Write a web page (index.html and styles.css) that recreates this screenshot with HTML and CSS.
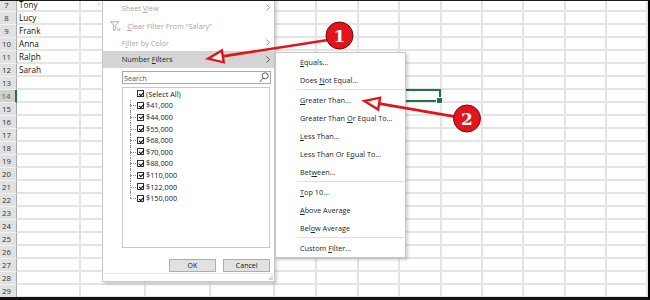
FILE: index.html
```html
<!DOCTYPE html>
<html lang="en">
<head>
  <meta charset="UTF-8" />
  <title>Number Filters</title>
  <link rel="stylesheet" href="styles.css">
</head>
<body>
  <div class="screen">
    <div class="sheet" id="sheet"></div>

    <div class="filter-menu">
      <div class="menu-item muted">
        <span class="ico"></span>
        <span class="label">Sheet <u>V</u>iew</span>
        <svg class="chev" width="4" height="7" viewBox="0 0 4 7"><path d="M0.5 0.5l3 3-3 3" /></svg>
      </div>
      <div class="menu-gap"></div>
      <div class="menu-item muted">
        <span class="ico">
          <svg width="11" height="11" viewBox="0 0 11 11"><path d="M0.5 0.8h8.4l-3.2 3.6v3.8l-2 1.4v-5.2z" /><path d="M7.4 7.2l2.8 2.8M10.2 7.2l-2.8 2.8" /></svg>
        </span>
        <span class="label shifted"><u>C</u>lear Filter From "Salary"</span>
      </div>
      <div class="menu-item muted">
        <span class="ico"></span>
        <span class="label">F<u>i</u>lter by Color</span>
        <svg class="chev" width="4" height="7" viewBox="0 0 4 7"><path d="M0.5 0.5l3 3-3 3" /></svg>
      </div>
      <div class="menu-item hover">
        <span class="ico"></span>
        <span class="label">Number <u>F</u>ilters</span>
        <svg class="chev" width="4" height="7" viewBox="0 0 4 7"><path d="M0.5 0.5l3 3-3 3" /></svg>
      </div>

      <div class="search">
        <span>Search</span>
        <svg width="10" height="11" viewBox="0 0 10 11"><circle cx="6.2" cy="3.8" r="3" /><path d="M4 6.2L0.8 10" /></svg>
      </div>

      <div class="values">
        <div class="value"><span class="box"></span>(Select All)</div>
        <div class="tree">
          <div class="value"><span class="box"></span>$41,000</div>
          <div class="value"><span class="box"></span>$44,000</div>
          <div class="value"><span class="box"></span>$55,000</div>
          <div class="value"><span class="box"></span>$68,000</div>
          <div class="value"><span class="box"></span>$70,000</div>
          <div class="value"><span class="box"></span>$88,000</div>
          <div class="value"><span class="box"></span>$110,000</div>
          <div class="value"><span class="box"></span>$122,000</div>
          <div class="value"><span class="box"></span>$150,000</div>
        </div>
      </div>

      <div class="actions">
        <button class="btn">OK</button>
        <button class="btn">Cancel</button>
      </div>
      <div class="grip">
        <svg width="5" height="5" viewBox="0 0 5 5"><rect x="3.5" y="0.5" width="1" height="1" /><rect x="1.5" y="2.5" width="1" height="1" /><rect x="3.5" y="2.5" width="1" height="1" /><rect x="3.5" y="3.8" width="1" height="1" /><rect x="1.5" y="3.8" width="1" height="1" /></svg>
      </div>
    </div>

    <div class="submenu">
      <div class="option"><span><u>E</u>quals...</span></div>
      <div class="option"><span>Does <u>N</u>ot Equal...</span></div>
      <div class="divider"></div>
      <div class="option"><span><u>G</u>reater Than...</span></div>
      <div class="option"><span>Greater Than <u>O</u>r Equal To...</span></div>
      <div class="option"><span><u>L</u>ess Than...</span></div>
      <div class="option"><span>Less Than Or E<u>q</u>ual To...</span></div>
      <div class="option"><span>Bet<u>w</u>een...</span></div>
      <div class="divider"></div>
      <div class="option"><span><u>T</u>op 10...</span></div>
      <div class="option"><span><u>A</u>bove Average</span></div>
      <div class="option"><span>Bel<u>o</u>w Average</span></div>
      <div class="divider"></div>
      <div class="option"><span>Custom <u>F</u>ilter...</span></div>
    </div>

    <svg class="notes" width="650" height="300" viewBox="0 0 650 300">
      <line x1="221" y1="56.6" x2="328" y2="40" />
      <polygon points="208,58.7 223.7,62.3 221.9,50.5" />
      <circle cx="339.5" cy="35.5" r="13.5" />
      <text x="339.5" y="41.6">1</text>

      <line x1="378" y1="103.4" x2="455" y2="116.6" />
      <polygon points="364.3,101 378.1,109.5 380.1,97.7" />
      <circle cx="467" cy="118.5" r="13.5" />
      <text x="467" y="124.6">2</text>
    </svg>
  </div>

  <script>
    const names = { 7: 'Tony', 8: 'Lucy', 9: 'Frank', 10: 'Anna', 11: 'Ralph', 12: 'Sarah' };
    const sheet = document.getElementById('sheet');
    for (let r = 7; r <= 29; r++) {
      const row = document.createElement('div');
      row.className = 'row';
      let html = `<div class="row-head${r === 14 ? ' current' : ''}">${r}</div>`;
      for (let c = 0; c < 13; c++) {
        let cls = 'cell';
        let text = '';
        if (c === 0 && names[r]) text = names[r];
        if (c === 1 && r === 7) { cls += ' mark'; text = ':'; }
        if (c === 7 && r === 14) cls += ' active';
        html += `<div class="${cls}">${text}</div>`;
      }
      row.innerHTML = html;
      sheet.appendChild(row);
    }
  </script>
</body>
</html>
```

FILE: styles.css
```css
* { box-sizing: border-box; }
body {
  margin: 0;
  background: #fff;
  font-family: 'Open Sans', 'Noto Sans', sans-serif;
}
.screen {
  position: relative; width: 650px; height: 300px; overflow: hidden;
  background: #fff;
  border-top: 1px solid #1c1c1c; border-right: 2px solid #000; border-bottom: 3px solid #111;
}

/* sheet grid */
.sheet { margin-top: -2px; }
.row {
  display: grid; height: 13px;
  grid-template-columns: 17px 64px 65px 65px 64px 42px 42px 41px 42px 41px 41px 42px 41px 41px;
}
.row-head {
  background: #e1e1e1; color: #333;
  border-right: 1px solid #ababab; border-bottom: 1px solid #f2f2f2;
  font-size: 7.8px; line-height: 12px; text-align: center; padding-right: 3px;
}
.row-head.current {
  background: #d0d0d0; color: #217346; border-right: 2px solid #217346;
}
.cell {
  position: relative;
  border-right: 2px solid #e4e4e4; border-bottom: 2px solid #e4e4e4;
  font-size: 8.2px; line-height: 11px; padding-left: 2px; color: #111;
  white-space: nowrap;
}
.cell.mark { padding-left: 17px; color: #555; font-size: 6px; }
.cell.active { z-index: 1; }
.cell.active::before {
  content: ""; position: absolute; left: -1px; top: -1px; right: -1px; bottom: -1px;
  border: 2px solid #217346;
}
.cell.active::after {
  content: ""; position: absolute; right: -3px; bottom: -3px;
  width: 5px; height: 5px; background: #217346; border: 1px solid #fff;
}

/* autofilter dropdown */
.filter-menu {
  position: absolute; left: 102px; top: -19px; width: 173px; z-index: 2;
  background: #fff; border: 1px solid #c6c6c6;
  box-shadow: 2px 2px 3px rgba(0, 0, 0, 0.18);
  padding-top: 16.5px; font-size: 7.3px; color: #262626;
}
.menu-item {
  display: flex; align-items: center; height: 16.5px; padding-right: 4.5px;
  white-space: nowrap;
}
.menu-item .ico { width: 18.7px; padding-left: 7px; display: flex; align-items: center; }
.menu-item .ico svg { fill: none; stroke: #9a9a9a; stroke-width: 0.8; }
.menu-item .label { flex: 1; }
.menu-item .label.shifted { padding-left: 5.6px; }
.menu-item .chev { fill: none; stroke: currentColor; stroke-width: 0.9; }
.menu-item.muted { color: #a6a6a6; }
.menu-item.muted .chev { stroke: #8c8c8c; }
.menu-item.hover { background: #d4d4d4; }
.menu-item.hover .chev { stroke: #444; }
.menu-gap { height: 2px; }
u { text-underline-offset: 1px; }

.search {
  display: flex; align-items: center; justify-content: space-between;
  margin: 3.5px 0 0 19px; width: 149px; height: 13px;
  border: 1px solid #a9a9a9; padding: 0 1px 0 1px;
  color: #555; font-size: 7.2px;
}
.search svg { fill: none; stroke: #444; stroke-width: 0.9; }

.values {
  margin: 2.5px 0 0 19px; width: 148px; height: 161.2px;
  border: 1px solid #c9c9c9; padding-top: 0.6px;
  font-size: 7.3px; color: #1a1a1a;
}
.value {
  position: relative; display: flex; align-items: center; gap: 2px;
  height: 11.6px; padding-left: 14px; white-space: nowrap;
}
.tree .value::before {
  content: ""; position: absolute; left: 7px; top: 0; bottom: 0;
  border-left: 1px dotted #8a8a8a;
}
.tree .value:last-child::before { bottom: 50%; }
.tree .value::after {
  content: ""; position: absolute; left: 7px; top: 50%; width: 6px;
  border-top: 1px dotted #8a8a8a;
}
.box {
  position: relative; width: 7px; height: 7px;
  border: 1px solid #333; background: #fff;
}
.box::after {
  content: ""; position: absolute; left: 1.6px; top: -0.2px; width: 2px; height: 4px;
  border: solid #000; border-width: 0 1.3px 1.3px 0; transform: rotate(45deg);
}

.actions { display: flex; justify-content: flex-end; gap: 7.6px; margin-top: 11px; padding-right: 4px; }
.btn {
  width: 46.7px; height: 13.3px; padding: 0;
  background: #e1e1e1; border: 1px solid #adadad; border-radius: 0;
  font-family: 'Open Sans', sans-serif; font-size: 7px; color: #111;
}
.grip {
  height: 8px; margin-top: 1.5px; border-top: 1px solid #ececec;
  display: flex; justify-content: flex-end; align-items: flex-end; padding: 0 1px 1px 0;
}
.grip svg { fill: #8a8a8a; }

/* Number Filters submenu */
.submenu {
  position: absolute; left: 275px; top: 50.5px; width: 131px; z-index: 3;
  background: #fff; border: 1px solid #c6c6c6;
  box-shadow: 2px 2px 3px rgba(0, 0, 0, 0.18);
  font-size: 7.3px; color: #262626;
}
.option { height: 18px; display: flex; align-items: center; padding-left: 24px; white-space: nowrap; }
.divider { height: 1px; margin: 0.5px 0 0.5px 20.7px; background: #e0e0e0; }

/* red callouts */
.notes { position: absolute; left: 0; top: -1px; z-index: 4; pointer-events: none; }
.notes line { stroke: #e3141c; stroke-width: 2.6; stroke-linecap: round; }
.notes polygon { fill: #fff; stroke: #e3141c; stroke-width: 2.4; stroke-linejoin: miter; }
.notes circle { fill: #e3141c; stroke: #6d0b0b; stroke-width: 1; }
.notes text {
  fill: #fff; text-anchor: middle;
  font-family: 'DejaVu Serif', serif; font-weight: bold; font-size: 17px;
}
```
